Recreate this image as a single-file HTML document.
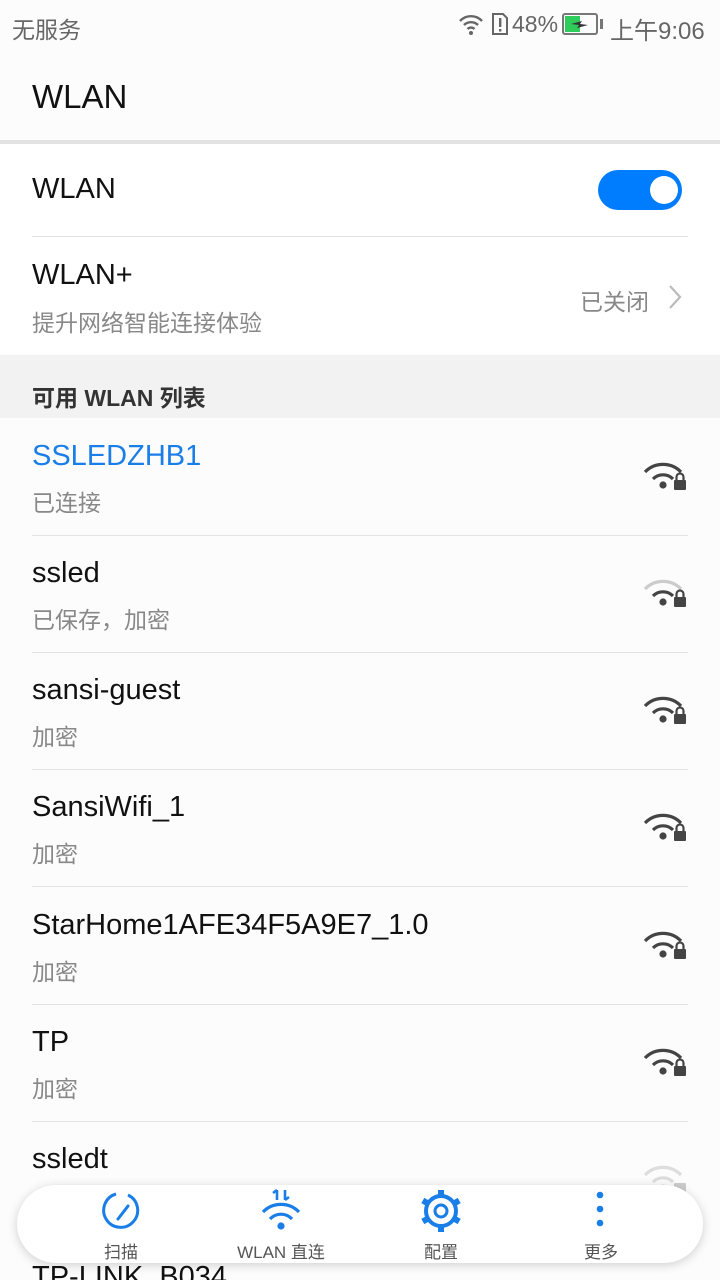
<!DOCTYPE html>
<html><head><meta charset="utf-8"><style>
*{margin:0;padding:0;box-sizing:border-box}
html,body{width:720px;height:1280px;overflow:hidden}
body{background:#fcfcfc;font-family:"Liberation Sans","Noto Sans CJK SC",sans-serif;position:relative;color:#000}
.abs{position:absolute}
.sb{font-size:23px;color:#666}
.name{position:absolute;left:32px;font-size:29px;color:#111}
.sub{position:absolute;left:32px;font-size:23px;color:#888}
.div{position:absolute;left:32px;right:32px;height:1px;background:#e3e3e3}
.wifi{position:absolute;left:640px;width:48px;height:36px}
.bar{position:absolute;left:17px;top:1185px;width:686px;height:78px;background:#fff;border-radius:39px;box-shadow:0 2px 10px rgba(0,0,0,.18)}
.bi{position:absolute;top:1238px;font-size:17px;color:#555;text-align:center;width:140px}
</style></head><body>
<div class="abs sb" style="left:12px;top:11px">无服务</div>
<svg class="abs" style="left:457px;top:12px" width="30" height="24" viewBox="0 0 30 24"><path d="M3 9 A15 15 0 0 1 25 9" stroke="#666" stroke-width="2.4" fill="none"/><path d="M7 13 A10 10 0 0 1 21 13" stroke="#666" stroke-width="2.4" fill="none"/><path d="M10.5 17 A5 5 0 0 1 17.5 17" stroke="#666" stroke-width="2.4" fill="none"/><circle cx="14" cy="21" r="2" fill="#666"/></svg>
<svg class="abs" style="left:490px;top:12px" width="20" height="24" viewBox="0 0 20 24"><path d="M3 2 H13 L17 6 V22 H3 Z" stroke="#666" stroke-width="2" fill="none"/><rect x="9" y="6" width="2.4" height="9" fill="#666"/><rect x="9" y="17" width="2.4" height="2.5" fill="#666"/></svg>
<div class="abs sb" style="left:512px;top:11px">48%</div>
<svg class="abs" style="left:562px;top:13px" width="42" height="22" viewBox="0 0 42 22"><rect x="1" y="1" width="34" height="20" rx="2" stroke="#777" stroke-width="2" fill="none"/><rect x="3" y="3" width="15" height="16" fill="#2ecc5a"/><rect x="38" y="6" width="3" height="10" fill="#777"/><path d="M9 11 L20 8 L18 11 L26 12 L15 15 L17 12 Z" fill="#333"/></svg>
<div class="abs sb" style="left:610px;top:11px;font-size:24px">上午9:06</div>
<div class="abs" style="left:32px;top:78px;font-size:33px;color:#111">WLAN</div>
<div class="abs" style="left:0;top:140px;width:720px;height:4px;background:#e3e3e3"></div>
<div class="abs" style="left:0;top:144px;width:720px;height:210px;background:#fff"></div>
<div class="name" style="top:173px">WLAN</div>
<div class="abs" style="left:598px;top:170px;width:84px;height:40px;border-radius:20px;background:#007dff"></div>
<div class="abs" style="left:650px;top:176px;width:28px;height:28px;border-radius:14px;background:#fff"></div>
<div class="div" style="top:236px"></div>
<div class="name" style="top:259px">WLAN+</div>
<div class="sub" style="top:304px">提升网络智能连接体验</div>
<div class="sub" style="left:580px;top:283px">已关闭</div>
<svg class="abs" style="left:666px;top:283px" width="18" height="28" viewBox="0 0 18 28"><path d="M4 3 L14 14 L4 25" stroke="#bbb" stroke-width="2.2" fill="none"/></svg>
<div class="abs" style="left:0;top:355px;width:720px;height:63px;background:#f2f2f2"></div>
<div class="abs" style="left:32px;top:379px;font-size:23px;color:#333;font-weight:bold">可用 WLAN 列表</div>

<div class="name" style="top:440px;color:#1a7ee8">SSLEDZHB1</div>
<div class="sub" style="top:484px">已连接</div>
<div class="div" style="top:535px"></div>
<div class="name" style="top:557px">ssled</div>
<div class="sub" style="top:601px">已保存，加密</div>
<div class="div" style="top:652px"></div>
<div class="name" style="top:674px">sansi-guest</div>
<div class="sub" style="top:718px">加密</div>
<div class="div" style="top:769px"></div>
<div class="name" style="top:791px">SansiWifi_1</div>
<div class="sub" style="top:835px">加密</div>
<div class="div" style="top:886px"></div>
<div class="name" style="top:909px">StarHome1AFE34F5A9E7_1.0</div>
<div class="sub" style="top:953px">加密</div>
<div class="div" style="top:1004px"></div>
<div class="name" style="top:1026px">TP</div>
<div class="sub" style="top:1070px">加密</div>
<div class="div" style="top:1121px"></div>
<div class="name" style="top:1143px">ssledt</div>
<div class="sub" style="top:1187px;color:#ddd">加密 (可使用 WPS)</div>
<div class="name" style="top:1261px">TP-LINK_B034</div>

<svg class="wifi" style="top:456px" viewBox="0 0 48 36"><path d="M5 16 A25 25 0 0 1 41 16" stroke="#444" stroke-width="3.2" fill="none"/><path d="M13 23 A14 14 0 0 1 33 23" stroke="#444" stroke-width="3.2" fill="none"/><circle cx="23" cy="29" r="3.6" fill="#444"/><rect x="34" y="24" width="12" height="10" rx="1" fill="#444"/><path d="M36.5 24 V21 A3.5 3.5 0 0 1 43.5 21 V24" stroke="#444" stroke-width="2.2" fill="none"/></svg>
<svg class="wifi" style="top:573px" viewBox="0 0 48 36"><path d="M5 16 A25 25 0 0 1 41 16" stroke="#ccc" stroke-width="3.2" fill="none"/><path d="M13 23 A14 14 0 0 1 33 23" stroke="#444" stroke-width="3.2" fill="none"/><circle cx="23" cy="29" r="3.6" fill="#444"/><rect x="34" y="24" width="12" height="10" rx="1" fill="#444"/><path d="M36.5 24 V21 A3.5 3.5 0 0 1 43.5 21 V24" stroke="#444" stroke-width="2.2" fill="none"/></svg>
<svg class="wifi" style="top:690px" viewBox="0 0 48 36"><path d="M5 16 A25 25 0 0 1 41 16" stroke="#444" stroke-width="3.2" fill="none"/><path d="M13 23 A14 14 0 0 1 33 23" stroke="#444" stroke-width="3.2" fill="none"/><circle cx="23" cy="29" r="3.6" fill="#444"/><rect x="34" y="24" width="12" height="10" rx="1" fill="#444"/><path d="M36.5 24 V21 A3.5 3.5 0 0 1 43.5 21 V24" stroke="#444" stroke-width="2.2" fill="none"/></svg>
<svg class="wifi" style="top:807px" viewBox="0 0 48 36"><path d="M5 16 A25 25 0 0 1 41 16" stroke="#444" stroke-width="3.2" fill="none"/><path d="M13 23 A14 14 0 0 1 33 23" stroke="#444" stroke-width="3.2" fill="none"/><circle cx="23" cy="29" r="3.6" fill="#444"/><rect x="34" y="24" width="12" height="10" rx="1" fill="#444"/><path d="M36.5 24 V21 A3.5 3.5 0 0 1 43.5 21 V24" stroke="#444" stroke-width="2.2" fill="none"/></svg>
<svg class="wifi" style="top:925px" viewBox="0 0 48 36"><path d="M5 16 A25 25 0 0 1 41 16" stroke="#444" stroke-width="3.2" fill="none"/><path d="M13 23 A14 14 0 0 1 33 23" stroke="#444" stroke-width="3.2" fill="none"/><circle cx="23" cy="29" r="3.6" fill="#444"/><rect x="34" y="24" width="12" height="10" rx="1" fill="#444"/><path d="M36.5 24 V21 A3.5 3.5 0 0 1 43.5 21 V24" stroke="#444" stroke-width="2.2" fill="none"/></svg>
<svg class="wifi" style="top:1042px" viewBox="0 0 48 36"><path d="M5 16 A25 25 0 0 1 41 16" stroke="#444" stroke-width="3.2" fill="none"/><path d="M13 23 A14 14 0 0 1 33 23" stroke="#444" stroke-width="3.2" fill="none"/><circle cx="23" cy="29" r="3.6" fill="#444"/><rect x="34" y="24" width="12" height="10" rx="1" fill="#444"/><path d="M36.5 24 V21 A3.5 3.5 0 0 1 43.5 21 V24" stroke="#444" stroke-width="2.2" fill="none"/></svg>
<svg class="wifi" style="top:1159px" viewBox="0 0 48 36"><path d="M5 16 A25 25 0 0 1 41 16" stroke="#ddd" stroke-width="3.2" fill="none"/><path d="M13 23 A14 14 0 0 1 33 23" stroke="#ddd" stroke-width="3.2" fill="none"/><circle cx="23" cy="29" r="3.6" fill="#ddd"/><rect x="34" y="24" width="12" height="10" rx="1" fill="#ccc"/></svg>

<div class="bar"></div>
<svg class="abs" style="left:99px;top:1188px" width="44" height="44" viewBox="0 0 44 44"><path d="M29 7 A17 17 0 1 1 17 6" stroke="#1a7ee8" stroke-width="3" fill="none"/><path d="M19 31 L29 18" stroke="#1a7ee8" stroke-width="3" stroke-linecap="round"/></svg>
<div class="bi" style="left:51px">扫描</div>
<svg class="abs" style="left:258px;top:1188px" width="46" height="44" viewBox="0 0 46 44"><path d="M19 2 V12 M15 5 L19 2 M27 2 V12 M27 12 L31 9" stroke="#1a7ee8" stroke-width="2.6" fill="none"/><path d="M5 24 A25 25 0 0 1 41 24" stroke="#1a7ee8" stroke-width="3.2" fill="none"/><path d="M12 31 A15 15 0 0 1 34 31" stroke="#1a7ee8" stroke-width="3.2" fill="none"/><circle cx="23" cy="38" r="3.6" fill="#1a7ee8"/></svg>
<div class="bi" style="left:211px">WLAN 直连</div>
<svg class="abs" style="left:419px;top:1189px" width="44" height="44" viewBox="0 0 44 44"><g fill="#1a7ee8"><rect x="19" y="1" width="6" height="7"/><rect x="19" y="36" width="6" height="7"/><rect x="19" y="1" width="6" height="7" transform="rotate(60 22 22)"/><rect x="19" y="1" width="6" height="7" transform="rotate(120 22 22)"/><rect x="19" y="1" width="6" height="7" transform="rotate(240 22 22)"/><rect x="19" y="1" width="6" height="7" transform="rotate(300 22 22)"/></g><circle cx="22" cy="22" r="15" stroke="#1a7ee8" stroke-width="4" fill="none"/><circle cx="22" cy="22" r="6" stroke="#1a7ee8" stroke-width="3" fill="none"/></svg>
<div class="bi" style="left:371px">配置</div>
<svg class="abs" style="left:590px;top:1190px" width="20" height="40" viewBox="0 0 20 40"><circle cx="10" cy="5" r="3.3" fill="#1a7ee8"/><circle cx="10" cy="19" r="3.3" fill="#1a7ee8"/><circle cx="10" cy="33" r="3.3" fill="#1a7ee8"/></svg>
<div class="bi" style="left:531px">更多</div>
</body></html>
